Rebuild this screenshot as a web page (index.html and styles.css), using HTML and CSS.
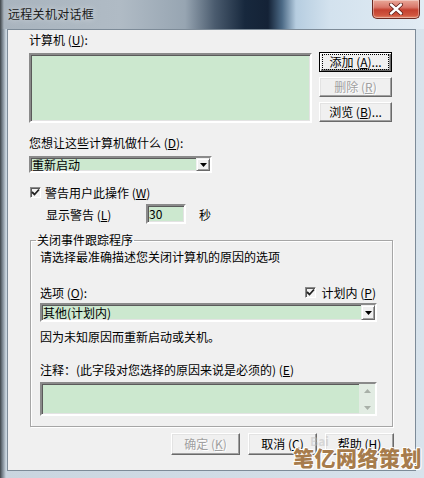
FILE: index.html
```html
<!DOCTYPE html>
<html lang="zh-CN">
<head>
<meta charset="utf-8">
<title>远程关机对话框</title>
<link rel="stylesheet" href="styles.css">
</head>
<body>
<div class="window">
  <div class="titlebar">
    <div class="title">远程关机对话框</div>
    <div class="close">
      <svg width="16" height="12" viewBox="0 0 16 12"><path d="M3 1.5 L13 10.5 M13 1.5 L3 10.5" stroke="#5a1a14" stroke-width="4" stroke-linecap="round"/><path d="M3 1.5 L13 10.5 M13 1.5 L3 10.5" stroke="#fff" stroke-width="2.4" stroke-linecap="round"/></svg>
    </div>
  </div>
  <div class="client">
    <div class="top">
      <div class="left">
        <div class="lbl first">计算机 (<u>U</u>):</div>
        <div class="listbox sunken"></div>
      </div>
      <div class="right">
        <div class="btn default"><span class="focus">添加 (<u>A</u>)...</span></div>
        <div class="btn disabled">删除 (<u>R</u>)</div>
        <div class="btn">浏览 (<u>B</u>)...</div>
      </div>
    </div>
    <div class="lbl q">您想让这些计算机做什么 (<u>D</u>):</div>
    <div class="combo combo1 sunken">
      <span class="combo-text">重新启动</span>
      <span class="arrow"><svg width="7" height="4" viewBox="0 0 7 4"><path d="M0 0H7L3.5 4Z" fill="#000"/></svg></span>
    </div>
    <div class="chk-row">
      <span class="chk"><svg width="9" height="9" viewBox="0 0 9 9"><path d="M1 4 L3.5 6.5 L8 1.5" stroke="#222" stroke-width="1.8" fill="none"/></svg></span>
      <span>警告用户此操作 (<u>W</u>)</span>
    </div>
    <div class="warn-row">
      <span class="warn-lbl">显示警告 (<u>L</u>)</span>
      <span class="num sunken">30</span>
      <span class="sec">秒</span>
    </div>
    <fieldset class="group">
      <legend>关闭事件跟踪程序</legend>
      <div class="lbl desc">请选择最准确描述您关闭计算机的原因的选项</div>
      <div class="opt-row">
        <span>选项 (<u>O</u>):</span>
        <span class="planned">
          <span class="chk"><svg width="9" height="9" viewBox="0 0 9 9"><path d="M1 4 L3.5 6.5 L8 1.5" stroke="#222" stroke-width="1.8" fill="none"/></svg></span>
          <span>计划内 (<u>P</u>)</span>
        </span>
      </div>
      <div class="combo combo2 sunken">
        <span class="combo-text">其他(计划内)</span>
        <span class="arrow"><svg width="7" height="4" viewBox="0 0 7 4"><path d="M0 0H7L3.5 4Z" fill="#000"/></svg></span>
      </div>
      <div class="lbl reason">因为未知原因而重新启动或关机。</div>
      <div class="lbl note">注释：(此字段对您选择的原因来说是必须的) (<u>E</u>)</div>
      <div class="textarea sunken">
        <div class="scroll">
          <svg width="7" height="4" viewBox="0 0 7 4"><path d="M0 4H7L3.5 0Z" fill="#a8b0a8"/></svg>
          <svg width="7" height="4" viewBox="0 0 7 4"><path d="M0 0H7L3.5 4Z" fill="#a8b0a8"/></svg>
        </div>
      </div>
    </fieldset>
    <div class="bottom">
      <div class="btn wide disabled">确定 (<u>K</u>)</div>
      <div class="btn wide">取消 (<u>C</u>)</div>
      <div class="btn wide">帮助 (<u>H</u>)</div>
    </div>
    <div class="bai">Bai</div>
  </div>
  <div class="watermark">笔亿网络策划</div>
</div>
</body>
</html>
```
FILE: styles.css
```css
* { box-sizing: border-box; }
html, body { margin: 0; padding: 0; }
body {
  width: 424px;
  height: 478px;
  overflow: hidden;
  background: #d6e2ec;
  font-family: "Noto Sans CJK SC", "Noto Sans", sans-serif;
  font-size: 12px;
  color: #000;
}
u { text-decoration: underline; text-underline-offset: 1px; }
.window {
  position: relative;
  width: 424px;
  height: 478px;
  background: linear-gradient(90deg, #3e4448 0, #6f7a84 2px, #c9d5df 6px, #d8e3ec 100%);
}
.titlebar {
  height: 29px;
  display: flex;
  justify-content: space-between;
  align-items: flex-start;
  background: linear-gradient(90deg, #3e4448 0, #a9b4be 4px, #b0bbc5 120px, #97a5b2 185px, #4a5b6e 215px, #17283d 245px, #142236 268px, #4c6a86 282px, #b6cde0 296px, #d3e2ee 330px, #e2ecf4 100%);
}
.title {
  margin-top: 6px;
  padding-left: 8px;
  line-height: 16px;
  font-size: 12px;
  color: #1a1a1a;
  letter-spacing: 0.3px;
  text-shadow: 0 0 6px rgba(255,255,255,0.7);
}
.close {
  width: 48px;
  height: 19px;
  margin-right: 4px;
  border: 1px solid #6b2a22;
  border-top: none;
  border-radius: 0 0 5px 5px;
  background: linear-gradient(180deg, #e9a899 0, #d9776a 40%, #c4402f 55%, #d0563f 85%, #e38a6e 100%);
  display: flex;
  align-items: center;
  justify-content: center;
  box-shadow: inset 0 0 0 1px rgba(255,255,255,0.35);
}
.client {
  position: relative;
  margin-left: 7px;
  width: 409px;
  height: 442px;
  border: 1px solid #7d8b98;
  background: #f0f0f0;
}
.sunken {
  border: 2px solid;
  border-color: #8a8a8a #ffffff #ffffff #8a8a8a;
  box-shadow: inset 1px 1px 0 #5a5a5a, inset -1px -1px 0 #e3e3e3;
  background: #cce8cf;
}
.top {
  display: flex;
  padding-left: 21px;
}
.left { width: 283px; }
.lbl { line-height: 16px; height: 16px; white-space: nowrap; }
.lbl.first { margin-top: 2px; }
.listbox { margin-top: 5px; height: 70px; }
.right {
  margin-left: 7px;
  padding-top: 22px;
  display: flex;
  flex-direction: column;
  gap: 5px;
}
.btn {
  width: 73px;
  height: 20px;
  display: flex;
  align-items: center;
  justify-content: center;
  background: #f0f0f0;
  border: 1px solid;
  border-color: #ffffff #6a6a6a #6a6a6a #ffffff;
  box-shadow: inset -1px -1px 0 #a0a0a0, inset 1px 1px 0 #e3e3e3;
  line-height: 14px;
  white-space: nowrap;
}
.btn.default {
  border: 1px solid #000;
  box-shadow: inset 1px 1px 0 #fff, inset -1px -1px 0 #6a6a6a, inset -2px -2px 0 #a0a0a0;
}
.focus {
  display: flex;
  align-items: center;
  justify-content: center;
  width: 65px;
  height: 14px;
  outline: 1px dotted #000;
}
.btn.disabled { color: #a0a0a0; text-shadow: 1px 1px 0 #fff; }
.q { margin-top: 12px; padding-left: 21px; }
.combo {
  display: flex;
  align-items: center;
  justify-content: space-between;
}
.combo1 { margin-top: 5px; margin-left: 21px; width: 183px; height: 17px; }
.combo-text { padding-left: 1px; line-height: 13px; }
.arrow {
  width: 14px;
  height: 100%;
  display: flex;
  align-items: center;
  justify-content: center;
  background: #f0f0f0;
  border: 1px solid;
  border-color: #f0f0f0 #6a6a6a #6a6a6a #f0f0f0;
  box-shadow: inset 1px 1px 0 #fff, inset -1px -1px 0 #a0a0a0;
}
.chk-row {
  margin-top: 11px;
  padding-left: 22px;
  height: 16px;
  display: flex;
  align-items: center;
  gap: 4px;
}
.chk {
  width: 11px;
  height: 11px;
  border: 1px solid;
  border-color: #8a8a8a #fff #fff #8a8a8a;
  box-shadow: inset 1px 1px 0 #5a5a5a;
  background: #f4f4f4;
  display: flex;
  align-items: center;
  justify-content: center;
}
.warn-row {
  margin-top: 4px;
  padding-left: 38px;
  height: 20px;
  display: flex;
  align-items: center;
}
.warn-lbl { width: 100px; }
.num {
  width: 40px;
  height: 20px;
  line-height: 16px;
  padding-left: 1px;
}
.sec { margin-left: 13px; }
.group {
  margin: 8px 0 0 22px;
  width: 363px;
  padding: 0 15px 10px 9px;
  border: 1px solid #a6a6a6;
  box-shadow: inset 1px 1px 0 #fff, 1px 1px 0 #fff;
  min-inline-size: 0;
}
.group legend {
  margin-left: -4px;
  padding: 0 1px;
  line-height: 16px;
  height: 16px;
}
.desc { margin-top: 1px; }
.opt-row {
  margin-top: 19px;
  height: 16px;
  display: flex;
  justify-content: space-between;
  align-items: center;
}
.planned {
  display: flex;
  align-items: center;
  gap: 6px;
  padding-right: 1px;
}
.combo2 { margin-top: 3px; width: 337px; height: 19px; }
.reason { margin-top: 7px; }
.note { margin-top: 17px; }
.textarea {
  margin-top: 4px;
  width: 337px;
  height: 34px;
  display: flex;
  justify-content: flex-end;
}
.scroll {
  width: 16px;
  height: 100%;
  background: #e2ece3;
  display: flex;
  flex-direction: column;
  justify-content: space-between;
  align-items: center;
  padding: 5px 0 4px;
}
.bottom {
  margin-top: 6px;
  padding-left: 163px;
  display: flex;
  gap: 8px;
}
.btn.wide { width: 69px; height: 22px; }
.bai {
  position: absolute;
  left: 302px;
  top: 404px;
  font-size: 12px;
  line-height: 14px;
  font-weight: bold;
  color: rgba(190, 190, 190, 0.5);
}
.watermark {
  position: absolute;
  left: 293px;
  top: 444px;
  font-size: 21px;
  font-weight: 900;
  line-height: 26px;
  color: #a77c4c;
  letter-spacing: 0.5px;
  text-shadow: 1px 0 0 #fff, -1px 0 0 #fff, 0 1px 0 #fff, 0 -1px 0 #fff, 1px 1px 0 #fff, -1px -1px 0 #fff;
}
```
